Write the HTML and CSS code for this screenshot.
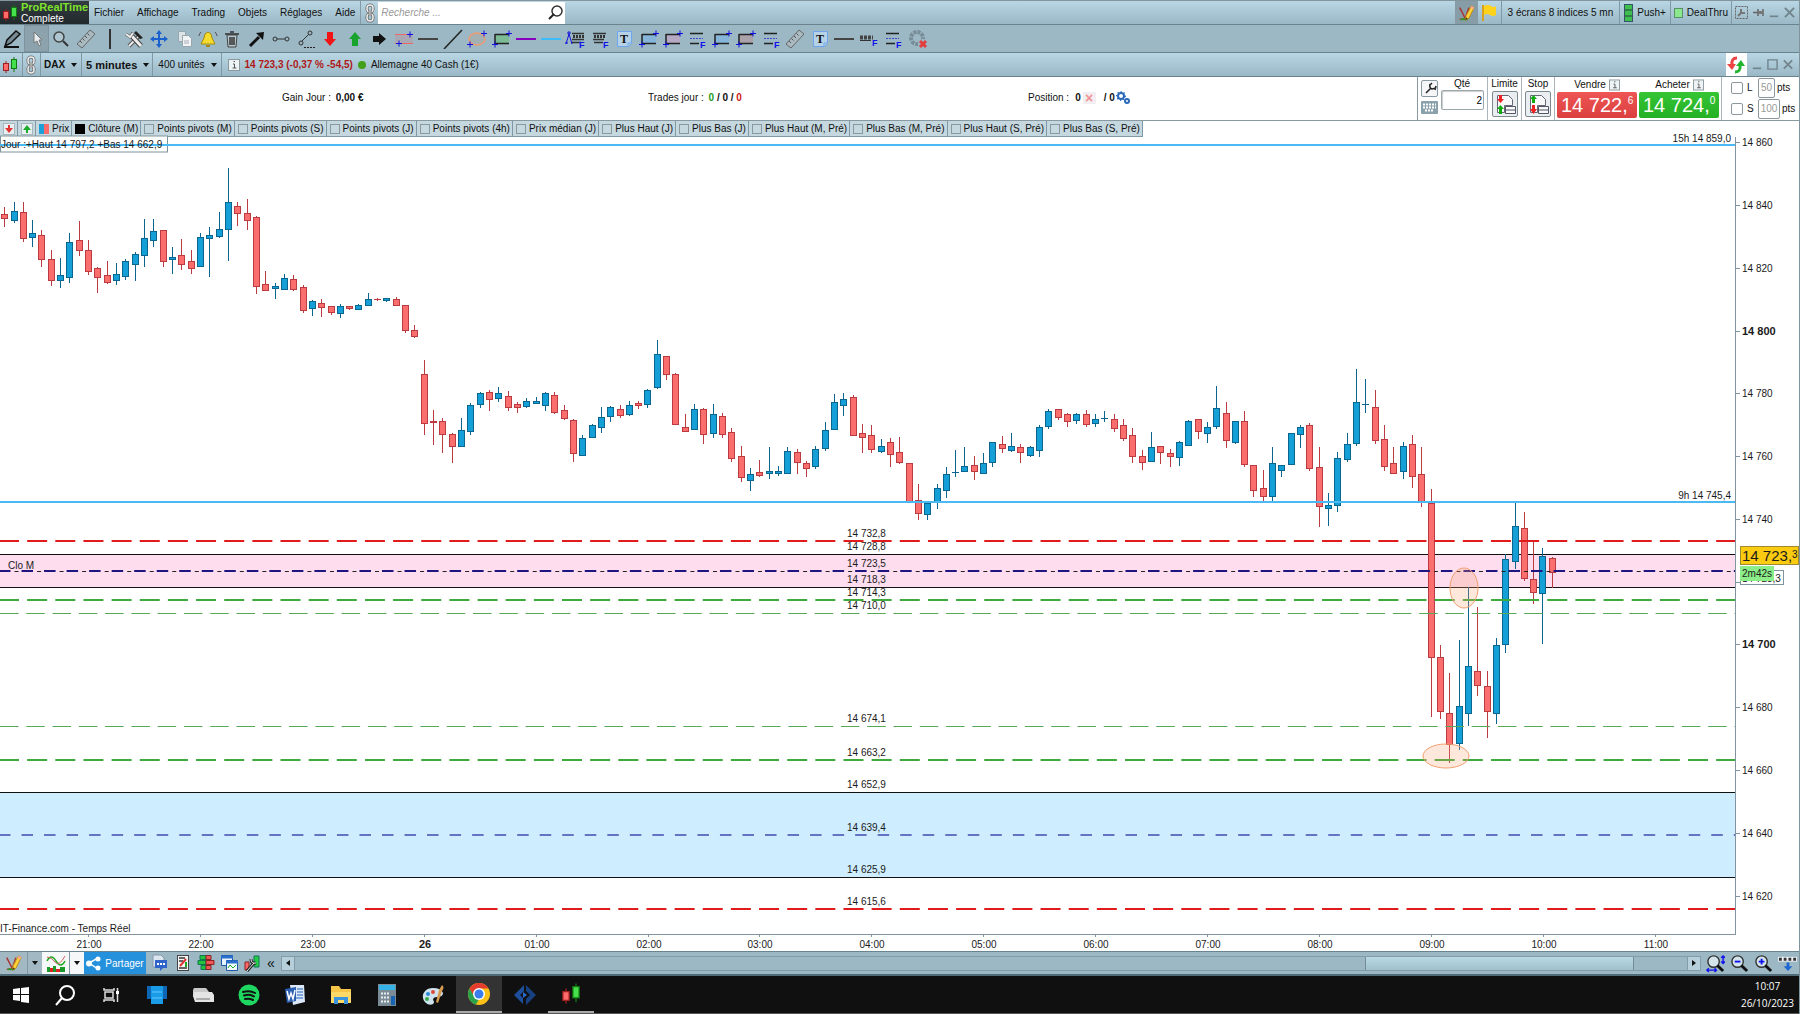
FILE: index.html
```html
<!DOCTYPE html>
<html lang="fr">
<head>
    <meta charset="UTF-8">
    <meta name="viewport" content="width=device-width, initial-scale=1.0">
    <link rel="stylesheet" href="styles.css">
    <title>ProRealTime</title>
</head>
<body>

    <!-- shared icons -->
    <svg class="sprite">
        <symbol id="i-candles" viewBox="0 0 16 18">
            <path d="M4 5v12" stroke="#a02020"/><rect x="1.5" y="7.5" width="5" height="7" fill="#ff6b6b" stroke="#a02020"/>
            <path d="M12 1v15" stroke="#117a11"/><rect x="9.500" y="3.500" width="5" height="9" fill="#45e04c" stroke="#117a11"/>
        </symbol>
        <symbol id="i-link" viewBox="0 0 12 20">
            <g fill="none" stroke="#666" stroke-width="3"><rect x="3" y="2" width="6" height="7" rx="3"/><rect x="3" y="11" width="6" height="7" rx="3"/></g>
            <g fill="none" stroke="#eee" stroke-width="1.500"><rect x="3" y="2" width="6" height="7" rx="3"/><rect x="3" y="11" width="6" height="7" rx="3"/></g>
            <path d="M6 7v6" stroke="#666" stroke-width="3"/><path d="M6 7v6" stroke="#eee"/>
        </symbol>
        <symbol id="i-pencil" viewBox="0 0 20 20">
            <path d="M2 4l6 12M2 4l1 3M2 17l6-1 4-12" fill="none" stroke="#a33" stroke-width="1.500"/><path d="M3 17h8" stroke="#2aa02a" stroke-width="2"/>
            <path d="M15 2l3 2-6 12-4 2 1-5z" fill="#ffd23c" stroke="#b8860b"/><path d="M15 2l3 2-1 2-3-2z" fill="#f7a8a0"/><path d="M8 18l1-3 2 1z" fill="#333"/>
        </symbol>
        <symbol id="i-ruler" viewBox="0 0 20 20">
            <path d="M1 15L14 1l5 4L6 19z" fill="#a9bac1" stroke="#666"/><path d="M4 12l2 2M6.500 9.500l2 2M9 7l2 2M11.500 4.500l2 2" stroke="#555"/>
        </symbol>
        <symbol id="i-note" viewBox="0 0 20 20">
            <path d="M3.500 2.500h14v12l-3 3h-11z" fill="#b5d3e4" stroke="#6fa4ee"/><path d="M17 14h-3v3" fill="none" stroke="#6fa4ee"/>
            <text x="10" y="14" text-anchor="middle" class="note-t">T</text>
        </symbol>
        <symbol id="i-flines" viewBox="0 0 20 20">
            <path d="M3 4.500h13M3 14.500h9" stroke="#222" stroke-width="1.500"/><path d="M3 9.500h13" stroke="#44c" stroke-dasharray="2 1"/>
            <text x="13" y="19" class="f-mark">F</text>
        </symbol>
        <symbol id="i-ef" viewBox="0 0 20 20">
            <path d="M3 4.500h13M3 10.500h11M4 13.500h9" stroke="#333" stroke-width="1.500"/><path d="M4 7.500h11" stroke="#333" stroke-width="3" stroke-dasharray="2 1"/>
            <text x="13" y="19" class="f-mark">F</text>
        </symbol>
        <symbol id="i-box" viewBox="0 0 20 20">
            <path d="M3 5.500h14v9h-14z" /><path d="M3 5.500h14M3 14.500h14M3 5v10" stroke="#222" stroke-width="1.500"/>
            <path d="M14 4.500h6M17 1.500v6M0 15.500h6M3 12.500v6" stroke="#11d"/>
        </symbol>
        <symbol id="i-line" viewBox="0 0 20 20"><path d="M0 10h20" stroke="currentColor" stroke-width="2"/></symbol>
        <symbol id="i-lens" viewBox="0 0 20 20">
            <circle cx="8" cy="8" r="6" fill="#d3e4ea" stroke="#333" stroke-width="1.500"/><path d="M12 12l6 6" stroke="#111" stroke-width="3"/>
        </symbol>
        <symbol id="i-info" viewBox="0 0 12 12"><rect x=".5" y=".5" width="11" height="11" fill="#eef3f5" stroke="#8a979d"/><path d="M5 5h1.500v4M4.500 9h4M5.500 2.500h1.500" fill="none" stroke="#555"/></symbol>
        <symbol id="i-min" viewBox="0 0 12 12"><path d="M1 10h10" stroke="currentColor" stroke-width="2"/></symbol>
        <symbol id="i-close" viewBox="0 0 12 12"><path d="M1 1l10 10M11 1L1 11" stroke="currentColor" stroke-width="2"/></symbol>
    </svg>

    <div class="app">
        <header class="menu-bar">
            <div class="logo">
                <svg width="16" height="20"><use href="#i-candles"/></svg>
                <div><span class="brand">ProRealTime</span><span>Complete</span></div>
            </div>
            <nav class="menu">
                <a href="#">Fichier</a><a href="#">Affichage</a><a href="#">Trading</a><a href="#">Objets</a><a href="#">Réglages</a><a href="#">Aide</a>
            </nav>
            <button class="link-btn" aria-label="Lier"><svg width="12" height="20"><use href="#i-link"/></svg></button>
            <div class="search">
                <input type="text" placeholder="Recherche ..." aria-label="Recherche">
                <svg width="15" height="15" viewBox="0 0 15 15"><circle cx="9" cy="6" r="5" fill="none" stroke="#333" stroke-width="1.500"/><path d="M6 9l-5 5" stroke="#222" stroke-width="2"/></svg>
            </div>
            <div class="menu-right">
                <button class="pressed" aria-label="Dessin"><svg width="18" height="18"><use href="#i-pencil"/></svg></button>
                <button class="flag" aria-label="Alerte"><svg width="16" height="18" viewBox="0 0 16 18"><path d="M2 1v16" stroke="#d8a21b" stroke-width="2"/><path d="M3 2q4-2 7 0t5 0v9q-3 2-6 0t-6 0z" fill="#ffd21c"/></svg></button>
                <span class="cell screens">3 écrans 8 indices 5 mn</span>
                <span class="cell push"><svg width="9" height="18" viewBox="0 0 9 18"><rect x=".5" y=".5" width="8" height="17" fill="#3fbf4f" stroke="#356"/><path d="M1 6h7M1 12h7" stroke="#244"/></svg>Push+</span>
                <span class="cell deal"><i class="green-box"></i>DealThru</span>
                <span class="window-icons">
                    <svg width="13" height="13" viewBox="0 0 13 13"><rect x=".5" y=".5" width="12" height="12" fill="none" stroke="#666" stroke-dasharray="2 1"/><path d="M3 10l4-4M6 3v4h4" fill="none" stroke="#777" stroke-width="2"/></svg>
                    <svg width="11" height="11" viewBox="0 0 11 11"><path d="M0 5.500h5M5 2v7M10 2v7" stroke="#666" stroke-width="1.500"/><path d="M5 4h5v3H5z" fill="#777"/></svg>
                    <svg width="10" height="12"><use href="#i-min"/></svg>
                    <svg width="11" height="11"><use href="#i-close"/></svg>
                </span>
            </div>
        </header>

        <div class="toolbar">
            <div class="tools">
                <button aria-label="Crayon"><svg viewBox="0 0 20 20"><path d="M3 17l2-6L14 2l4 3-9 9z" fill="#778b94" stroke="#111" stroke-width="1.500"/><path d="M2 18h15" stroke="#111" stroke-width="2"/></svg></button>
                <button class="active" aria-label="Curseur"><svg viewBox="0 0 20 20"><path d="M7 3v11l3-2 2 5 2-1-2-5h3z" fill="#e8eef0" stroke="#777"/></svg></button>
                <button aria-label="Loupe"><svg viewBox="0 0 20 20"><circle cx="8" cy="8" r="5" fill="#adc6d0" stroke="#444" stroke-width="1.500"/><path d="M12 12l5 5" stroke="#333" stroke-width="2"/></svg></button>
                <button aria-label="Règle"><svg><use href="#i-ruler"/></svg></button>
                <span class="tool-sep"></span>
                <button aria-label="Outils"><svg viewBox="0 0 20 20"><path d="M15 6L4 17" stroke="#555" stroke-width="4"/><path d="M15 6L4 17" stroke="#eee" stroke-width="2"/><path d="M5 5l11 12" stroke="#444" stroke-width="5"/><path d="M5 5l11 12" stroke="#eee" stroke-width="3"/><path d="M11 2l7 7-3 1-6-6z" fill="#222"/><path d="M1 5l4 3 3-4" fill="none" stroke="#555" stroke-width="3"/><path d="M1 5l4 3 3-4" fill="none" stroke="#eee" stroke-width="2"/></svg></button>
                <button aria-label="Déplacer"><svg viewBox="0 0 20 20"><path d="M10 1l3 4h-2v4h4V7l4 3-4 3v-2h-4v4h2l-3 4-3-4h2v-4H5v2l-4-3 4-3v2h4V5H7z" fill="#1b62cf"/></svg></button>
                <button aria-label="Copier"><svg viewBox="0 0 20 20"><path d="M4.500 2.500h7v10h-7z" fill="#dde4e8" stroke="#98a6ad"/><path d="M8.500 6.500h6l3 3v8h-9z" fill="#f2f5f6" stroke="#98a6ad"/><path d="M10 12h5M10 14h5" stroke="#aab"/></svg></button>
                <button aria-label="Alarme"><svg viewBox="0 0 20 20"><path d="M10 3q4 1 4 6l3 6H3l3-6q0-5 4-6z" fill="#f5dc2c" stroke="#a58b10"/><path d="M8 16h4v2H8z" fill="#a58b10"/><path d="M3 3q-2 2-2 4M17 3q2 2 2 4" fill="none" stroke="#555"/></svg></button>
                <button aria-label="Corbeille"><svg viewBox="0 0 20 20"><path d="M5 6h10l-1 12H6z" fill="#b8c8cf" stroke="#444"/><path d="M3 5h14M8 3h4M8 8v8M10 8v8M12 8v8" stroke="#333" stroke-width="1.500"/></svg></button>
                <button aria-label="Flèche"><svg viewBox="0 0 20 20"><path d="M3 17l9-9" stroke="#111" stroke-width="3"/><path d="M9 4l8-1-1 8z" fill="#111"/></svg></button>
                <button aria-label="Segment"><svg viewBox="0 0 20 20"><path d="M6 10h8" stroke="#333"/><circle cx="4" cy="10" r="2" fill="none" stroke="#333"/><circle cx="16" cy="10" r="2" fill="none" stroke="#333"/></svg></button>
                <button aria-label="Droite"><svg viewBox="0 0 20 20"><path d="M6 12l7-7" stroke="#333"/><circle cx="5" cy="14" r="2" fill="none" stroke="#333"/><circle cx="14" cy="4" r="2" fill="none" stroke="#333"/><path d="M8 18.500h12" stroke="#222" stroke-dasharray="2 1"/></svg></button>
                <button aria-label="Baisse"><svg viewBox="0 0 20 20"><path d="M7 3h6v7h3l-6 7-6-7h3z" fill="#f01414"/></svg></button>
                <button aria-label="Hausse"><svg viewBox="0 0 20 20"><path d="M7 17h6v-7h3l-6-7-6 7h3z" fill="#18a32c"/></svg></button>
                <button aria-label="Suite"><svg viewBox="0 0 20 20"><path d="M4 7h6V4l7 6-7 6v-3H4z" fill="#111"/></svg></button>
                <button aria-label="Zone"><svg viewBox="0 0 20 20"><path d="M1 5h18v9H1z" fill="#aaa9b3"/><path d="M1 5.500h18M1 14.500h18" stroke="#e66"/><path d="M13 5.500h6M16 2.500v6M2 14.500h6M5 11.500v6" stroke="#11d"/></svg></button>
                <button class="dark" aria-label="Horizontale"><svg><use href="#i-line"/></svg></button>
                <button aria-label="Oblique"><svg viewBox="0 0 20 20"><path d="M1 20L19 1" stroke="#222" stroke-width="1.500"/></svg></button>
                <button aria-label="Ellipse"><svg viewBox="0 0 20 20"><ellipse cx="10" cy="10" rx="8" ry="6" fill="#a5b0b2" stroke="#ee9a70" stroke-width="1.500"/><path d="M14 4.500h6M17 1.500v6M0 15.500h6M3 12.500v6" stroke="#11d"/></svg></button>
                <button class="box-green" aria-label="Rectangle"><svg><use href="#i-box"/></svg></button>
                <button class="purple" aria-label="Ligne violette"><svg><use href="#i-line"/></svg></button>
                <button class="sky" aria-label="Ligne bleue"><svg><use href="#i-line"/></svg></button>
                <button aria-label="Fibonacci"><svg viewBox="0 0 20 20"><path d="M7 4.500h12M7 10.500h12M6 13.500h10" stroke="#333" stroke-width="1.500"/><path d="M8 7.500h11" stroke="#333" stroke-width="3" stroke-dasharray="2 1"/><path d="M1 15L4 5l3 10M2 4h4M4 2v4M0 14h3" fill="none" stroke="#11d"/><text x="14" y="19" class="f-mark">F</text></svg></button>
                <button aria-label="Retracement"><svg><use href="#i-ef"/></svg></button>
                <button aria-label="Texte"><svg><use href="#i-note"/></svg></button>
                <button class="box-blue" aria-label="Zone bleue"><svg><use href="#i-box"/></svg></button>
                <button class="box-pink" aria-label="Zone rose"><svg><use href="#i-box"/></svg></button>
                <button aria-label="Niveaux"><svg><use href="#i-flines"/></svg></button>
                <button class="box-blue" aria-label="Zone 3"><svg><use href="#i-box"/></svg></button>
                <button class="box-red" aria-label="Zone 4"><svg><use href="#i-box"/></svg></button>
                <button aria-label="Niveaux 2"><svg><use href="#i-flines"/></svg></button>
                <button aria-label="Mesure"><svg><use href="#i-ruler"/></svg></button>
                <button aria-label="Texte 2"><svg><use href="#i-note"/></svg></button>
                <button class="dark" aria-label="Ligne"><svg><use href="#i-line"/></svg></button>
                <button aria-label="Niveaux 3"><svg viewBox="0 0 20 20"><path d="M1 8.500h13" stroke="#444" stroke-width="4" stroke-dasharray="3 1"/><path d="M1 11.500h11" stroke="#333"/><text x="13" y="17" class="f-mark">F</text></svg></button>
                <button aria-label="Niveaux 4"><svg><use href="#i-flines"/></svg></button>
                <button aria-label="Supprimer"><svg viewBox="0 0 20 20"><circle cx="9" cy="9" r="6" fill="none" stroke="#778c96" stroke-width="4" stroke-dasharray="3 1"/><circle cx="15" cy="15" r="5" fill="#9bb8c4"/><path d="M12 12l6 6M18 12l-6 6" stroke="#e33d3d" stroke-width="3"/></svg></button>
            </div>
        </div>

        <div class="chart-title">
            <span class="cell first"><svg width="16" height="18"><use href="#i-candles"/></svg></span>
            <span class="cell link"><svg width="12" height="20"><use href="#i-link"/></svg></span>
            <button class="cell drop dax">DAX</button>
            <button class="cell drop minutes">5 minutes</button>
            <button class="cell drop units">400 unités</button>
            <svg class="info" width="12" height="12"><use href="#i-info"/></svg>
            <b class="quote">14 723,3 (-0,37 % -54,5)</b>
            <i class="dot"></i>
            <span>Allemagne 40 Cash (1€)</span>
            <div class="title-right">
                <button class="refresh" aria-label="Actualiser"><svg width="18" height="18" viewBox="0 0 18 18"><path d="M10 2Q4 2 5 9" fill="none" stroke="#ee4343" stroke-width="3"/><path d="M0 8h9l-4 6z" fill="#ee4343"/><path d="M8 16q6 0 5-7" fill="none" stroke="#22b52f" stroke-width="3"/><path d="M9 10h9l-4-6z" fill="#22b52f"/></svg></button>
                <svg width="10" height="12"><use href="#i-min"/></svg>
                <svg width="11" height="11" viewBox="0 0 12 12"><path d="M1 1h10v10H1z" fill="none" stroke="#71838b" stroke-width="1.500"/></svg>
                <svg width="10" height="11"><use href="#i-close"/></svg>
            </div>
        </div>

        <div class="trade-bar">
            <div class="summary">
                <span>Gain Jour : <b>0,00 €</b></span>
                <span>Trades jour : <b><em class="win">0</em> / 0 / <em class="loss">0</em></b></span>
                <span class="position">Position : <b>0</b><i class="cross">×</i><b>/ 0</b>
                    <svg width="14" height="14" viewBox="0 0 14 14"><circle cx="5" cy="5" r="3" fill="none" stroke="#2b69bd" stroke-width="2"/><circle cx="5" cy="5" r="4" fill="none" stroke="#2b69bd" stroke-width="2" stroke-dasharray="1 2"/><circle cx="11" cy="10" r="2" fill="none" stroke="#2b69bd" stroke-width="2"/></svg>
                </span>
            </div>
            <div class="order">
                <div class="order-side">
                    <button class="small-btn" aria-label="Configurer"><svg width="13" height="13" viewBox="0 0 13 13"><path d="M2 11l5-5M6 2q-1 4 2 5l4-1M6 3l2-2M12 4l-1 4" fill="none" stroke="#222" stroke-width="1.500"/></svg></button>
                    <button class="keyboard" aria-label="Clavier"><svg width="17" height="13" viewBox="0 0 17 13"><rect width="17" height="13" rx="1" fill="#8ba1ab"/><path d="M2 3.500h13M2 6.500h13M4 9.500h9" stroke="#fff" stroke-width="2" stroke-dasharray="2 1"/></svg></button>
                </div>
                <div class="qty"><label for="qty">Qté</label><input id="qty" type="text" value="2"></div>
                <div class="order-col"><span>Limite</span>
                    <button aria-label="Limite"><svg width="21" height="21" viewBox="0 0 21 21"><path d="M2.500 1.500h11l4 4v6h-8v7h-7z" fill="#f7f9fa" stroke="#667"/><path d="M10.500 12.500h10v7h-10zM10 16h10" fill="#f7f9fa" stroke="#556"/><path d="M4 1h3v4h2L5.500 9 2 5h2z" fill="#e22"/><path d="M4 20h3v-5h2l-3.500-4L2 15h2z" fill="#1a1"/></svg></button>
                </div>
                <div class="order-col"><span>Stop</span>
                    <button aria-label="Stop"><svg width="21" height="21" viewBox="0 0 21 21"><path d="M2.500 1.500h11l4 4v6h-8v7h-7z" fill="#f7f9fa" stroke="#667"/><path d="M10.500 12.500h10v7h-10zM10 16h10" fill="#f7f9fa" stroke="#556"/><path d="M4 9h3V5h2L5.500 1 2 5h2z" fill="#1a1"/><path d="M4 11h3v4h2l-3.500 5L2 15h2z" fill="#e22"/></svg></button>
                </div>
                <div class="deal-col"><span>Vendre <svg width="11" height="12"><use href="#i-info"/></svg></span><button class="sell">14 722,<sup>6</sup></button></div>
                <div class="deal-col buy-col"><span>Acheter <svg width="11" height="12"><use href="#i-info"/></svg></span><button class="buy">14 724,<sup>0</sup></button></div>
                <div class="limits">
                    <div><input type="checkbox" id="lim"><label for="lim">L</label><input type="text" class="pts" value="50" aria-label="Points limite">pts</div>
                    <div><input type="checkbox" id="stp"><label for="stp">S</label><input type="text" class="pts wide" value="100" aria-label="Points stop">pts</div>
                </div>
            </div>
        </div>

        <div class="legend">
            <button aria-label="Réduire"><svg width="12" height="12" viewBox="0 0 12 12"><rect x=".5" y=".5" width="11" height="11" fill="#e9f0f3" stroke="#a9b7bd"/><path d="M5 2h2v3h3L6 10 2 5h3z" fill="#e03535"/></svg></button>
            <button aria-label="Agrandir"><svg width="12" height="12" viewBox="0 0 12 12"><rect x=".5" y=".5" width="11" height="11" fill="#e9f0f3" stroke="#a9b7bd"/><path d="M5 10h2V7h3L6 2 2 7h3z" fill="#1cab2c"/></svg></button>
            <span class="key"><i class="swatch duo"></i>Prix</span>
            <span class="key"><i class="swatch"></i>Clôture (M)</span>
            <label><input type="checkbox">Points pivots (M)</label>
            <label><input type="checkbox">Points pivots (S)</label>
            <label><input type="checkbox">Points pivots (J)</label>
            <label><input type="checkbox">Points pivots (4h)</label>
            <label><input type="checkbox">Prix médian (J)</label>
            <label><input type="checkbox">Plus Haut (J)</label>
            <label><input type="checkbox">Plus Bas (J)</label>
            <label><input type="checkbox">Plus Haut (M, Pré)</label>
            <label><input type="checkbox">Plus Bas (M, Pré)</label>
            <label><input type="checkbox">Plus Haut (S, Pré)</label>
            <label><input type="checkbox">Plus Bas (S, Pré)</label>
        </div>

        <div class="chart"><svg id="chart"></svg></div>

        <div class="bottom-bar">
            <button class="draw" aria-label="Dessin"><svg width="18" height="18"><use href="#i-pencil"/></svg></button>
            <button class="arrow" aria-label="Choix dessin"><i class="down"></i></button>
            <button class="white" aria-label="Indicateurs"><svg width="20" height="19" viewBox="0 0 20 19"><path d="M1 7q4-8 9 0t9 0" fill="none" stroke="#2a2" stroke-width="1.500"/><path d="M1 3q4 0 8 5t10-6" fill="none" stroke="#c66"/><path d="M1 13h3v5H1zM7 12h3v6H7zM14 13h5v5h-5z" fill="#1b9a2b"/><path d="M4 14h3v4H4zM10 15h4v3h-4z" fill="#d22"/></svg></button>
            <button class="white arrow" aria-label="Choix indicateur"><i class="down"></i></button>
            <button class="share"><svg width="15" height="15" viewBox="0 0 15 15"><path d="M12 2L3 7l9 6" fill="none" stroke="#fff" stroke-width="1.500"/><g fill="#fff"><circle cx="12" cy="3" r="2.500"/><circle cx="3" cy="7.500" r="3"/><circle cx="12" cy="12" r="2.500"/></g></svg>Partager</button>
            <div class="bottom-icons">
                <svg viewBox="0 0 18 18"><path d="M2 1h8l3 3v9H2z" fill="#dce6ee" stroke="#89a"/><path d="M4 6h12v8h-4l-3 3v-3H4z" fill="#2f63c9"/><path d="M6 10h8" stroke="#fff" stroke-width="2" stroke-dasharray="2 1"/></svg>
                <svg viewBox="0 0 18 18"><rect x="3.500" y="1.500" width="11" height="15" fill="#f4f4f4" stroke="#444"/><path d="M5 4h6M5 7h4M5 14h8" stroke="#333" stroke-width="1.500"/><path d="M6 12l6-7" stroke="#d33" stroke-width="2"/><path d="M12 8v5" stroke="#2a2" stroke-width="2"/></svg>
                <svg viewBox="0 0 18 18"><path d="M3 1.500h6v4H3zM1 6.500h8v4H1zM4 11.500h5v4H4z" fill="#23c43a" stroke="#175"/><path d="M9 1.500h5v4H9zM9 6.500h8v4H9zM9 11.500h5v4H9z" fill="#ee5858" stroke="#822"/></svg>
                <svg viewBox="0 0 18 18"><path d="M1.500 1.500h11v10h-11z" fill="#e8f4ff" stroke="#1c56a8"/><path d="M1 3h12" stroke="#2a6fcc" stroke-width="3"/><path d="M6.500 6.500h11v10h-11z" fill="#f3faff" stroke="#1c56a8"/><path d="M6 8h12" stroke="#2a6fcc" stroke-width="3"/><path d="M8 14l2-3 3 3 3-3" fill="none" stroke="#2a2"/></svg>
                <svg viewBox="0 0 18 18"><path d="M2 8h4v8H2z" fill="#f66" stroke="#822"/><path d="M11 2h5v11h-5z" fill="#2c4" stroke="#175"/><path d="M4 17l7-8M8 5q0 5 5 4" fill="none" stroke="#222" stroke-width="3"/><path d="M4 17l7-8M8 5q0 5 5 4" fill="none" stroke="#eee"/></svg>
            </div>
            <span class="chevrons">«</span>
            <button class="scroll-btn" aria-label="Gauche"><i class="left"></i></button>
            <div class="track"><div class="thumb"></div></div>
            <button class="scroll-btn" aria-label="Droite"><i class="right"></i></button>
            <div class="zooms">
                <svg viewBox="0 0 20 20"><use href="#i-lens"/><path d="M18 2v8M16 4l2-2 2 2M16 8l2 2 2-2M1 17h10M3 15l-2 2 2 2M9 15l2 2-2 2" fill="none" stroke="#11e" stroke-width="1.500"/></svg>
                <svg viewBox="0 0 20 20"><use href="#i-lens"/><path d="M5 8h6" stroke="#11e" stroke-width="2"/></svg>
                <svg viewBox="0 0 20 20"><use href="#i-lens"/><path d="M5 8h6M8 5v6" stroke="#11e" stroke-width="2"/></svg>
                <svg viewBox="0 0 20 20"><rect x="0" y="3" width="20" height="5" fill="#eef2f4"/><path d="M1 5.500h18" stroke="#333" stroke-width="3" stroke-dasharray="3 2"/><path d="M9 9h3v4h3l-4.500 5L6 13h3z" fill="#1c67d2"/></svg>
            </div>
        </div>

        <footer class="taskbar">
            <button class="start" aria-label="Démarrer"><svg width="16" height="16" viewBox="0 0 16 16"><path d="M0 2l7-1v6H0zM8 1l8-1v7H8zM0 8h7v6l-7-1zM8 8h8v8l-8-1z" fill="#fff"/></svg></button>
            <button class="find" aria-label="Rechercher"><svg width="22" height="22" viewBox="0 0 22 22"><circle cx="13" cy="9" r="7" fill="none" stroke="#fff" stroke-width="2"/><path d="M8 14l-6 7" stroke="#fff" stroke-width="2"/></svg></button>
            <button class="views" aria-label="Vues"><svg width="17" height="16" viewBox="0 0 17 16"><path d="M1 1v2h10V1M2 5h8v6H2zM1 15v-2h10v2M14.500 1v14" fill="none" stroke="#ddd" stroke-width="1.500"/><path d="M13 4h3v3h-3z" fill="#fff"/></svg></button>
            <button aria-label="Bureau"><svg width="22" height="20" viewBox="0 0 22 20"><path d="M1 1h20v13h-5v5H6v-5H1z" fill="#0d67b5"/><path d="M5 1h12v18H5z" fill="#1a9be8"/><path d="M6 7h10M6 13h10" stroke="#62c8ff"/></svg></button>
            <button aria-label="Imprimante"><svg width="22" height="16" viewBox="0 0 22 16"><path d="M2 1h12l3 4v5H1V3z" fill="#c9c9c9"/><path d="M2 5h18l2 3v7H3L1 9z" fill="#e4e4e4"/><path d="M4 12h14" stroke="#999" stroke-width="1.500"/></svg></button>
            <button aria-label="Spotify"><svg width="22" height="22" viewBox="0 0 22 22"><circle cx="11" cy="11" r="10.500" fill="#1ed760"/><path d="M5 8q7-2 12 1M6 11.500q6-2 10 1M7 15q4-1 8 1" fill="none" stroke="#111" stroke-width="2" stroke-linecap="round"/></svg></button>
            <button aria-label="Word"><svg width="22" height="22" viewBox="0 0 22 22"><path d="M6 1h14l1 17-12 3z" fill="#dbe8f7"/><path d="M13 5h6M13 8h6M13 11h6M12 14h7" stroke="#5f8fd0" stroke-width="1.500"/><path d="M1 5l11-2v14L3 19z" fill="#2b5db0"/><path d="M3 7l2 8 2-6 2 6 2-9" fill="none" stroke="#fff" stroke-width="1.500"/></svg></button>
            <button aria-label="Explorateur"><svg width="22" height="20" viewBox="0 0 22 20"><path d="M1 1h8l2 3h10v14H1z" fill="#f6c549"/><path d="M1 7h20v11H1z" fill="#ffd968"/><path d="M4 19v-7h14v7h-4v-4H8v4z" fill="#3b94dd"/></svg></button>
            <button aria-label="Calculatrice"><svg width="18" height="22" viewBox="0 0 18 22"><rect width="18" height="22" fill="#7c8c96"/><rect x="1" y="1" width="16" height="5" fill="#36b3e6"/><path d="M3 9.500h9M3 13.500h9M3 17.500h9" stroke="#e8eef1" stroke-width="2" stroke-dasharray="2 1"/><path d="M13 12h4v9h-4z" fill="#1865b4"/></svg></button>
            <button aria-label="Paint"><svg width="23" height="22" viewBox="0 0 23 22"><path d="M11 4C4 4 0 9 1 14s6 8 10 6q2-2 0-4 0-3 4-3 6 0 6-4-2-5-10-5z" fill="#cfe3ee"/><circle cx="6" cy="10" r="2" fill="#2d8adb"/><circle cx="11" cy="8" r="2" fill="#e0483a"/><circle cx="5" cy="15" r="2" fill="#38a94b"/><path d="M20 1q3 2 0 6l-4 12-2-1 3-12z" fill="#d59a50"/></svg></button>
            <button class="open current" aria-label="Chrome"><svg width="24" height="24" viewBox="0 0 24 24"><circle cx="12" cy="12" r="11" fill="#fbc116"/><path d="M2.500 6.500A11 11 0 0 1 21.500 6.500H12L7 15z" fill="#e33b2e"/><path d="M2.500 6.500l5 8.500 4.500 2-3 5.600A11 11 0 0 1 2.500 6.500z" fill="#2ba24c"/><circle cx="12" cy="12" r="6" fill="#fff"/><circle cx="12" cy="12" r="4.500" fill="#3a7cec"/></svg></button>
            <button aria-label="Outil"><svg width="22" height="22" viewBox="0 0 22 22"><path d="M10 1L0 11l9 9v-6l-3-3 4-4z" fill="#1d4f9c"/><path d="M12 1l10 10-10 10v-6l4-4-4-4z" fill="#16407f"/><path d="M9 8l4 3-4 3z" fill="#2a6bd0"/></svg></button>
            <button class="open" aria-label="ProRealTime"><svg width="20" height="23"><use href="#i-candles"/></svg></button>
            <div class="clock"><span>10:07</span><span>26/10/2023</span></div>
        </footer>
    </div>

    <script src="chart.js"></script>
</body>
</html>
```

FILE: styles.css
```css
*{
    box-sizing: border-box;
}

body{
    margin: 0;
    font-family: "Liberation Sans", Arial, sans-serif;
    font-size: 10px;
    color: #111;
    background-color: white;
}

button{
    margin: 0;
    padding: 0;
    border: none;
    background: none;
    color: inherit;
    font: inherit;
}

svg{
    display: block;
    flex-shrink: 0;
}

em{
    font-style: normal;
}

.sprite{
    display: none;
}

.note-t{
    font: bold 12px "Liberation Serif", serif;
    fill: #111;
}

.f-mark{
    font: bold 9px "Liberation Sans", sans-serif;
    fill: #1111ee;
}

.app{
    display: flex;
    flex-direction: column;
    height: 100vh;
    min-height: 500px;
    border-right: 1px solid #7f949d;
    overflow: hidden;
}

/* top menu */
.menu-bar, .chart-title{
    display: flex;
    align-items: center;
    flex-shrink: 0;
    background: linear-gradient(#b8d6e3, #9ab8c5);
    border-bottom: 1px solid #69838f;
    white-space: nowrap;
}

.menu-bar{
    height: 25px;
    border-top: 1px solid #83959d;
}

.logo{
    display: flex;
    align-items: center;
    gap: 3px;
    width: 89px;
    height: 100%;
    padding-left: 2px;
    background: linear-gradient(#333c41, #22292d);
    color: white;
    line-height: 11px;
}

.logo span{
    display: block;
}

.logo .brand{
    color: #7ee22c;
    font-size: 11px;
    font-weight: bold;
}

.menu{
    display: flex;
    gap: 13px;
    padding: 0 5px;
}

.menu a{
    color: inherit;
    text-decoration: none;
}

.link-btn{
    width: 18px;
    height: 100%;
    padding-left: 3px;
    border-left: 1px solid #829ba6;
}

.search{
    display: flex;
    align-items: center;
    width: 187px;
    height: 22px;
    padding-right: 2px;
    background-color: white;
}

.search input{
    flex: 1;
    min-width: 0;
    border: none;
    outline: none;
    padding: 0 3px;
    font: italic 10px "Liberation Sans", sans-serif;
}

.search input::placeholder{
    color: #999;
}

.menu-right, .title-right{
    display: flex;
    align-items: center;
    height: 100%;
    margin-left: auto;
}

.menu-right button{
    height: 100%;
    width: 23px;
    padding-left: 3px;
}

.menu-right .pressed{
    background-color: #869ca7;
}

.cell{
    display: flex;
    align-items: center;
    height: 100%;
    border-right: 1px solid #7f98a3;
}

.screens{
    padding: 0 6px;
    border-left: 1px solid #7f98a3;
}

.push, .deal{
    gap: 4px;
    padding: 0 4px;
}

.deal{
    padding: 0 3px;
}

.green-box{
    width: 9px;
    height: 10px;
    background-color: #8be78d;
    border: 1px solid #5a8f6c;
}

.window-icons{
    display: flex;
    align-items: center;
    gap: 5px;
    padding: 0 4px 0 3px;
    color: #71838b;
}

/* drawing tools */
.toolbar{
    flex-shrink: 0;
    height: 28px;
    background-color: #9bb8c4;
    border-bottom: 1px solid #69838f;
}

.tools{
    display: grid;
    grid-template-columns: repeat(38, 1fr);
    width: 930px;
    height: 27px;
}

.tools button{
    display: flex;
    align-items: center;
    justify-content: center;
}

.tools svg{
    width: 20px;
    height: 20px;
}

.tools .active{
    background-color: #8ca3ae;
    border: 1px solid #7f949e;
}

.tool-sep{
    width: 2px;
    height: 20px;
    margin: auto;
    background-color: #333;
}

.dark{ color: #444; }
.tools .purple{ color: #8800c0; }
.tools .sky{ color: #3cbcf8; }
.box-green{ fill: #7dbb97; }
.box-blue{ fill: #86b5d9; }
.box-pink{ fill: #b5a9c4; }
.box-red{ fill: #aba1a8; }

/* chart title */
.chart-title{
    height: 24px;
}

.first{
    width: 23px;
    padding-left: 2px;
}

.link{
    width: 18px;
    padding-left: 2px;
}

.drop{
    gap: 6px;
    padding: 0 5px;
}

.drop::after, .down, .left, .right{
    content: "";
    width: 0;
    height: 0;
    border: 3px solid transparent;
    border-top: 4px solid #111;
    border-bottom: none;
}

.dax{
    width: 41px;
    padding: 0 3px;
    font-weight: bold;
}

.minutes{
    padding: 0 3px 0 4px;
    font-size: 11px;
    font-weight: bold;
}

.units{
    padding-right: 4px;
}

.chart-title .info{
    margin: 0 5px 0 6px;
}

.quote{
    color: #b01818;
}

.dot{
    width: 8px;
    height: 8px;
    margin: 0 5px;
    border-radius: 50%;
    background-color: #43a01a;
}

.title-right{
    gap: 5px;
    padding-right: 6px;
    color: #71838b;
}

.refresh{
    width: 21px;
    height: 100%;
    padding-left: 1px;
    background-color: white;
}

/* day summary and order ticket */
.trade-bar{
    display: flex;
    flex-shrink: 0;
    height: 44px;
    border-bottom: 1px solid #8899a1;
}

.summary{
    flex: 1;
    display: grid;
    grid-template-columns: 366px 380px 1fr;
    align-items: center;
    padding: 0 0 2px 282px;
    white-space: nowrap;
}

.summary b{
    margin-left: 2px;
}

.win{ color: #199a1e; }
.loss{ color: #cc2020; }

.position{
    display: flex;
    align-items: center;
}

.position b{
    margin-left: 6px;
}

.position .cross{
    width: 13px;
    margin-left: 2px;
    background-color: #f3eef2;
    color: #f29393;
    font: bold 14px/12px "Liberation Sans", sans-serif;
    text-align: center;
}

.position .cross + b{
    margin: 0 1px 0 8px;
}

.order{
    display: flex;
    width: 382px;
    padding-left: 3px;
    border-left: 1px solid #8899a1;
}

.order-side{
    display: flex;
    flex-direction: column;
    gap: 4px;
    width: 20px;
    padding-top: 3px;
}

.small-btn{
    width: 17px;
    height: 17px;
    padding-left: 2px;
    border: 1px solid #8899a1;
    border-radius: 2px;
    background-color: #f4f6f7;
}

.qty{
    width: 47px;
    padding-right: 4px;
    text-align: center;
    border-right: 1px solid #aab6bc;
}

.qty label, .order-col span{
    display: block;
    height: 13px;
    line-height: 13px;
}

.qty input{
    width: 43px;
    height: 20px;
    padding: 0 1px;
    border: 1px solid #9aa7ad;
    border-radius: 2px;
    box-shadow: inset 1px 1px 1px #ccc;
    text-align: right;
    font: 10px "Liberation Sans", sans-serif;
}

.order-col{
    width: 33px;
    text-align: center;
}

.order-col button{
    width: 26px;
    height: 26px;
    margin-top: 1px;
    padding-left: 2px;
    border: 1px solid #7c8a91;
    border-radius: 2px;
    background-color: #eaeef0;
}

.order-col + .order-col{
    border-left: 1px solid #aab6bc;
}

.deal-col{
    width: 83px;
    padding-left: 2px;
    border-left: 1px solid #aab6bc;
}

.buy-col{
    border-left: none;
}

.deal-col span{
    display: flex;
    gap: 3px;
    align-items: center;
    justify-content: center;
    height: 15px;
}

.deal-col button{
    width: 80px;
    height: 26px;
    border-radius: 2px;
    color: white;
    font-size: 20px;
    line-height: 26px;
    text-align: left;
    padding-left: 4px;
    white-space: nowrap;
}

.deal-col sup{
    font-size: 10px;
    line-height: 10px;
}

.sell{ background: linear-gradient(#ee5656, #dc3e3e); }
.buy{ background: linear-gradient(#35c535, #24b024); }

.limits{
    flex: 1;
    margin-left: 1px;
    padding-left: 9px;
    border-left: 1px solid #aab6bc;
}

.limits div{
    display: flex;
    align-items: center;
    gap: 2px;
    height: 21px;
}

.limits label{
    width: 9px;
    margin-left: 2px;
}

.limits input, .legend input{
    appearance: none;
    margin: 0;
    border: 1px solid #8b989e;
    background: none;
}

.limits input[type=checkbox]{
    width: 12px;
    height: 12px;
    border-radius: 2px;
}

.limits .pts{
    width: 17px;
    height: 20px;
    padding: 0;
    border-radius: 2px;
    color: #999;
    text-align: center;
    font: 10px "Liberation Sans", sans-serif;
}

.limits .wide{
    width: 22px;
}

/* legend */
.legend{
    display: flex;
    flex-shrink: 0;
    height: 16px;
    white-space: nowrap;
}

.legend > *{
    display: flex;
    align-items: center;
    gap: 3px;
    padding: 0 2px 0 3px;
    background-color: #c5d8e0;
    border-right: 1px solid #8199a4;
    border-bottom: 1px solid #8199a4;
}

.legend input{
    width: 10px;
    height: 10px;
}

.swatch{
    width: 10px;
    height: 10px;
    background-color: black;
}

.duo{
    background: linear-gradient(90deg, #1ba0d8 50%, #fb6b6b 50%);
}

/* chart */
.chart{
    flex: 1;
    min-height: 0;
}

.chart svg{
    width: 100%;
    height: 100%;
    overflow: visible;
}

.chart text{
    font-size: 10px;
    fill: #1a1a1a;
}

.chart .strong{
    font-size: 11px;
    font-weight: bold;
}

.chart .big{
    font-size: 15px;
}

.middle{ text-anchor: middle; }
.end{ text-anchor: end; }
.axis{ stroke: #8194a0; fill: none; }
.up{ fill: #149fd7; stroke: #0a658f; }
.fall{ fill: #fb6e6e; stroke: #bb3b40; }
.pink-band{ fill: #fdddee; }
.blue-band{ fill: #ceedfe; }
.edge{ stroke: #111; }
.session{ stroke: #4bb9f3; stroke-width: 2; }
.red-dash{ stroke: #e01b1b; stroke-width: 2; stroke-dasharray: 20 8.15; stroke-dashoffset: 1; }
.green-dash{ stroke: #3ea93c; stroke-width: 2; stroke-dasharray: 20 8.15; stroke-dashoffset: 1; }
.green-thin{ stroke: #57a957; stroke-dasharray: 18.5 7.78; }
.navy-dash{ stroke: #6474c2; stroke-width: 2; stroke-dasharray: 11.5 11.03; stroke-dashoffset: 1; }
.mid-dash{ stroke: #1f1580; stroke-width: 2; stroke-dasharray: 11.5 11.03; stroke-dashoffset: 1; }
.mid-dot{ stroke: #222; stroke-dasharray: 4 18.53; stroke-dashoffset: 8; }
.mark{ fill: rgba(250, 160, 110, 0.25); stroke: #f0a070; }
.tag{ stroke: #7f949d; fill: white; }
.tag-price{ fill: #fbcb12; stroke: #a08a30; }
.tag-timer{ fill: #8cee88; }

/* bottom bar */
.bottom-bar{
    display: flex;
    align-items: center;
    flex-shrink: 0;
    height: 25px;
    background-color: #9bb8c4;
    border-top: 1px solid #69838f;
    border-bottom: 2px solid #506b78;
}

.bottom-bar button{
    display: flex;
    align-items: center;
    justify-content: center;
    height: 22px;
}

.draw{
    width: 27px;
}

.bottom-bar .arrow{
    width: 15px;
    border-left: 1px solid #7f98a3;
}

.bottom-bar .draw, .bottom-bar .arrow{
    background-color: #a2b9c4;
}

.white{
    width: 27px;
}

.bottom-bar .white{
    background-color: #f5f7f8;
}

.share{
    width: 62px;
    gap: 4px;
    background-color: #2590dc;
    color: white;
}

.bottom-icons{
    display: flex;
    gap: 5px;
    padding-left: 5px;
}

.bottom-icons svg{
    width: 18px;
    height: 18px;
}

.chevrons{
    width: 20px;
    text-align: center;
    font-size: 14px;
    line-height: 18px;
}

.bottom-bar .scroll-btn{
    width: 14px;
    height: 15px;
    background-color: #b5d0db;
    border: 1px solid #839ca7;
}

.left{ transform: rotate(90deg); }
.right{ transform: rotate(-90deg); }

.track{
    flex: 1;
    height: 15px;
    border-top: 1px solid #849ca7;
    border-bottom: 1px solid #849ca7;
}

.thumb{
    width: 19.3%;
    height: 13px;
    margin-left: 76.9%;
    background: linear-gradient(#b9d9e5, #a0c0cc);
    border-left: 1px solid #748c97;
    border-right: 1px solid #748c97;
}

.zooms{
    display: flex;
    gap: 5px;
    padding: 0 2px 0 5px;
}

.zooms svg{
    width: 19px;
    height: 19px;
}

/* windows taskbar */
.taskbar{
    display: flex;
    flex-shrink: 0;
    height: 38px;
    background-color: #101010;
    border-bottom: 1px solid #555;
}

.taskbar button{
    display: flex;
    align-items: center;
    justify-content: center;
    width: 46px;
}

.taskbar .start{ width: 42px; }

.taskbar .open{
    border-bottom: 2px solid #aaa;
}

.taskbar .current{
    background-color: #333;
}

.clock{
    margin-left: auto;
    padding: 2px 5px;
    color: white;
    text-align: center;
    font-family: "Open Sans", sans-serif;
}

.clock span{
    display: block;
    line-height: 17px;
}
```

FILE: chart.js
```js
// colour (1 = up, 0 = down), high, body top, body bottom, low
const candles = [
    [0,87,94,98,106],[1,82,91,100,102],[0,82,92,118,121],[1,100,113,117,126],[0,110,115,139,146],
    [0,130,139,160,165],[1,138,155,160,167],[1,113,122,157,162],[0,101,120,130,135],[0,120,130,151,154],
    [0,147,148,157,172],[0,141,155,162,163],[1,143,154,160,164],[1,139,141,156,159],[1,132,134,144,160],
    [1,99,118,135,146],[1,99,111,120,126],[0,110,110,141,146],[1,127,137,139,153],[0,119,135,144,149],
    [0,130,141,148,153],[1,113,117,146,146],[1,107,115,118,156],[1,92,109,116,117],[1,48,82,109,140],
    [0,82,86,93,105],[0,79,93,100,109],[0,96,97,166,173],[0,151,164,170,170],[1,163,166,168,178],
    [1,154,158,169,169],[0,155,159,169,170],[0,165,167,190,192],[1,180,181,188,195],[0,179,183,187,196],
    [0,186,186,192,194],[1,184,186,193,197],[0,186,186,188,189],[1,184,185,189,189],[1,173,179,185,185],
    [0,178,179,179,180],[1,178,178,180,181],[0,177,179,185,185],[0,185,185,210,212],[0,205,210,216,217],
    [0,240,254,303,314],[0,290,301,302,324],[0,298,301,314,332],[0,313,314,326,342],[1,298,310,326,326],
    [1,283,285,311,314],[1,272,273,284,287],[0,270,272,279,290],[1,267,273,278,281],[0,271,276,287,290],
    [0,282,284,287,292],[1,278,281,286,287],[1,277,281,283,283],[1,272,273,285,290],[0,272,275,292,293],
    [0,285,290,298,299],[0,299,300,333,341],[1,315,318,335,335],[1,304,305,317,317],[1,287,297,307,312],
    [1,286,287,296,301],[0,285,289,295,297],[1,281,285,294,295],[0,281,283,285,288],[1,269,270,284,287],
    [1,220,234,267,268],[0,236,236,254,259],[0,253,254,304,304],[0,294,307,311,311],[1,284,289,309,309],
    [0,288,289,314,323],[1,284,294,313,317],[0,293,296,314,317],[0,308,312,338,341],[0,326,336,357,361],
    [1,348,354,360,370],[0,340,352,355,356],[1,327,351,353,358],[1,346,351,353,355],[1,327,331,353,353],
    [0,329,332,342,353],[0,341,343,348,356],[1,326,329,346,348],[1,302,310,328,330],[1,274,282,309,309],
    [1,273,279,285,295],[0,275,277,315,315],[0,304,313,317,332],[0,305,315,329,332],[1,319,326,331,332],
    [0,318,322,334,346],[0,317,332,342,343],[0,343,343,381,381],[0,364,380,393,399],[1,382,383,394,399],
    [1,364,368,382,388],[1,347,354,370,377],[1,330,352,352,356],[1,327,346,351,351],[0,336,345,351,359],
    [1,333,343,353,353],[1,322,322,342,346],[0,316,324,328,332],[1,313,326,330,331],[0,324,327,332,342],
    [1,326,327,335,336],[1,305,307,330,336],[1,289,291,306,308],[0,289,289,297,299],[0,293,294,301,306],
    [1,293,294,300,303],[0,290,294,304,306],[1,294,299,303,306],[1,291,298,298,301],[0,294,299,308,311],
    [0,299,305,318,320],[0,308,315,336,342],[0,330,336,342,349],[1,312,327,341,341],[0,326,326,332,343],
    [0,329,333,336,346],[1,321,322,337,345],[1,300,301,325,325],[0,299,299,311,318],[1,302,307,313,322],
    [1,266,288,306,308],[0,282,293,320,327],[1,301,301,322,323],[0,291,301,344,346],[0,345,345,370,376],
    [0,350,368,376,380],[1,327,343,376,381],[1,345,345,350,356],[1,313,313,344,344],[1,305,307,314,327],
    [0,303,305,348,350],[0,327,347,386,406],[1,373,385,388,405],[1,332,338,385,391],[1,313,324,339,341],
    [1,249,282,323,325],[1,259,284,284,292],[0,270,287,320,323],[0,305,319,346,350],[0,327,343,353,353],
    [1,322,326,351,358],[0,315,324,356,367],[0,327,354,382,386],[0,369,383,537,596],[0,525,537,591,598],
    [0,553,593,624,642],[1,520,586,623,629],[1,467,546,593,605],[0,487,551,565,575],[0,551,566,591,617],
    [1,518,525,593,603],[1,434,439,524,532],[1,382,406,441,448],[0,392,408,458,460],[0,420,459,472,483],
    [1,428,436,473,523],[0,437,438,452,467]
];

const levels = [
    [14732.8, '14 732,8', 'red-dash'], [14728.8, '14 728,8', ''], [14723.5, '14 723,5', 'mid-dot'],
    [14718.3, '14 718,3', ''], [14714.3, '14 714,3', 'green-dash'], [14710.0, '14 710,0', 'green-thin'],
    [14674.1, '14 674,1', 'green-thin'], [14663.2, '14 663,2', 'green-dash'], [14652.9, '14 652,9', ''],
    [14639.4, '14 639,4', 'navy-dash'], [14625.9, '14 625,9', ''], [14615.6, '14 615,6', 'red-dash']
];

const hours = ['21:00', '22:00', '23:00', '26', '01:00', '02:00', '03:00', '04:00', '05:00',
    '06:00', '07:00', '08:00', '09:00', '10:00', '11:00'];

const chart = document.getElementById('chart');

function line(x1, y1, x2, y2, cls) {
    return `<line x1="${x1}" y1="${y1}" x2="${x2}" y2="${y2}" class="${cls}"/>`;
}

function rect(x, y, w, h, cls) {
    return `<rect x="${x}" y="${y}" width="${w}" height="${h}" class="${cls}"/>`;
}

function text(x, y, value, cls = '') {
    return `<text x="${x}" y="${y}" class="${cls}">${value}</text>`;
}

function draw() {
    const right = chart.clientWidth - 63;
    const bottom = chart.clientHeight - 17;
    const sx = right / 1736;
    const sy = bottom / 797;
    const row = v => Math.round((v - 17) * sy);
    const price = p => Math.round((5.2 + (14860 - p) * 3.139) * sy);
    const candleX = i => Math.floor((4.7 + i * 9.323) * sx);
    let out = '';

    // bands
    out += rect(0, price(14728.8), right, price(14718.3) - price(14728.8), 'pink-band');
    out += rect(0, price(14652.9), right, price(14625.9) - price(14652.9), 'blue-band');
    [14728.8, 14718.3, 14652.9, 14625.9].forEach(p => {
        out += line(0, price(p) + 0.5, right, price(p) + 0.5, 'edge');
    });

    // candles
    candles.forEach(([up, high, top, low, tail], i) => {
        const x = candleX(i);
        const cls = up ? 'up' : 'fall';
        out += line(x + 0.5, row(high), x + 0.5, row(tail) + 1, cls);
        if (low - top < 1) {
            out += line(x - 3, row(top) + 0.5, x + 4, row(top) + 0.5, cls);
        } else {
            out += rect(x - 2.5, row(top) + 0.5, 6, row(low) - row(top), cls);
        }
    });

    // levels
    out += rect(0.5, -1, 167, 16, 'tag');
    levels.forEach(([p, label, cls]) => {
        const y = price(p) + (/thin|dot/.test(cls) ? 0.5 : 0);
        if (cls) out += line(0, y, right, y, cls);
        if (cls === 'mid-dot') out += line(0, price(p), right, price(p), 'mid-dash');
        out += text(Math.round(847 * sx), price(p) - 4, label);
    });
    out += line(0, price(14859), right, price(14859), 'session');
    out += text(1, 11, 'Jour :+Haut 14 797,2 +Bas 14 662,9');
    out += text(right - 5, price(14859) - 3, '15h 14 859,0', 'end');
    out += line(0, price(14745.4), right, price(14745.4), 'session');
    out += text(right - 5, price(14745.4) - 3, '9h 14 745,4', 'end');
    out += text(8, price(14723.5) - 2, 'Clo M');
    out += text(0, bottom - 2, 'IT-Finance.com - Temps Réel');
    out += `<ellipse cx="${1464 * sx}" cy="${row(468)}" rx="14" ry="20" class="mark"/>`;
    out += `<ellipse cx="${1446 * sx}" cy="${row(636)}" rx="23" ry="12" class="mark"/>`;

    // axes
    out += line(right - 0.5, 0, right - 0.5, bottom + 0.5, 'axis');
    out += line(0, bottom + 0.5, right, bottom + 0.5, 'axis');
    for (let p = 14860; p >= 14620; p -= 20) {
        const y = price(p);
        out += line(right, y + 0.5, right + 4, y + 0.5, 'axis');
        if (p !== 14720) {
            out += text(right + 6, y + 4, '14 ' + (p - 14000), p % 100 ? '' : 'strong');
        }
    }
    hours.forEach((hour, i) => {
        const x = Math.round((88 + i * 111.9) * sx);
        out += line(x + 0.5, bottom, x + 0.5, bottom + 3, 'axis');
        out += text(x + 1, bottom + 14, hour, hour === '26' ? 'middle strong' : 'middle');
    });

    // last price
    const y = price(14723.3);
    out += rect(right + 4.5, y - 0.5, 43, 14, 'tag');
    out += text(right + 6, y + 11, '14 723,3');
    out += rect(right + 4, y - 5, 34, 15, 'tag-timer');
    out += text(right + 6, y + 6, '2m42s');
    out += rect(right + 4.5, y - 24.5, 58, 18, 'tag-price');
    out += text(right + 6, y - 10, '14 723,', 'big');
    out += text(right + 56, y - 13, '3');

    chart.innerHTML = out;
}

draw();
window.addEventListener('resize', draw);
```
